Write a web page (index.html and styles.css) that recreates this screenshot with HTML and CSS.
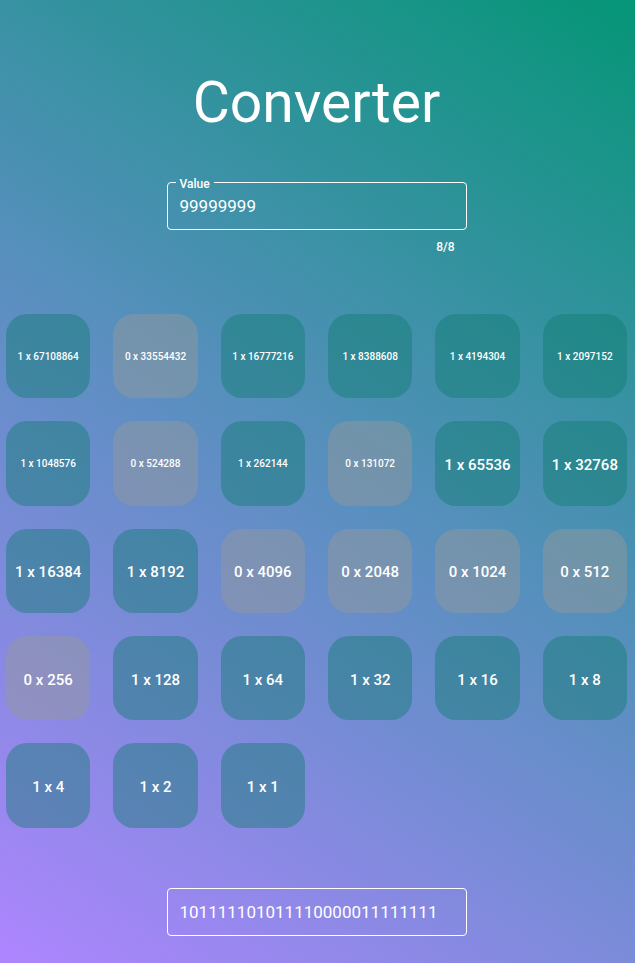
FILE: index.html
```html
<!DOCTYPE html>
<html lang="en">
<head>
<meta charset="utf-8">
<meta name="viewport" content="width=device-width, initial-scale=1">
<title>Converter</title>
<link rel="stylesheet" href="styles.css">
</head>
<body>
<main class="page">
  <h1 class="title">Converter</h1>
  <div class="entry">
    <fieldset class="field">
      <legend class="legend"><label for="value">Value</label></legend>
      <input class="input" id="value" type="text" inputmode="numeric" maxlength="8" value="99999999">
    </fieldset>
    <p class="counter">8/8</p>
  </div>
  <section class="tiles" aria-label="Bits">
    <div class="tile small">1 x 67108864</div>
    <div class="tile small off">0 x 33554432</div>
    <div class="tile small">1 x 16777216</div>
    <div class="tile small">1 x 8388608</div>
    <div class="tile small">1 x 4194304</div>
    <div class="tile small">1 x 2097152</div>
    <div class="tile small">1 x 1048576</div>
    <div class="tile small off">0 x 524288</div>
    <div class="tile small">1 x 262144</div>
    <div class="tile small off">0 x 131072</div>
    <div class="tile">1 x 65536</div>
    <div class="tile">1 x 32768</div>
    <div class="tile">1 x 16384</div>
    <div class="tile">1 x 8192</div>
    <div class="tile off">0 x 4096</div>
    <div class="tile off">0 x 2048</div>
    <div class="tile off">0 x 1024</div>
    <div class="tile off">0 x 512</div>
    <div class="tile off">0 x 256</div>
    <div class="tile">1 x 128</div>
    <div class="tile">1 x 64</div>
    <div class="tile">1 x 32</div>
    <div class="tile">1 x 16</div>
    <div class="tile">1 x 8</div>
    <div class="tile">1 x 4</div>
    <div class="tile">1 x 2</div>
    <div class="tile">1 x 1</div>
  </section>
  <input class="result" type="text" readonly aria-label="Binary" value="101111101011110000011111111">
</main>
</body>
</html>
```
FILE: styles.css
```css
* {
  box-sizing: border-box;
}

body {
  margin: 0;
  min-height: 100vh;
  background: linear-gradient(33deg, #ae85ff, #5a8fc0 50%, #059677);
  color: #fff;
  font-family: Roboto, sans-serif;
}

.page {
  display: flex;
  flex-direction: column;
  align-items: center;
  padding: 69px 8px 24px 6px;
}

.title {
  margin: 0 0 39px;
  font-size: 57px;
  font-weight: 400;
  line-height: 68px;
}

.entry {
  width: 300px;
  max-width: 100%;
  height: 138px;
}

.field {
  margin: 0;
  padding: 0;
  height: 54px;
  min-width: 0;
  border: 1px solid #fff;
  border-radius: 4px;
}

.legend {
  margin-left: 8px;
  padding: 0 4px;
  height: 12px;
  font-size: 12px;
  font-weight: 500;
  line-height: 16px;
}

.input,
.result {
  padding: 0 12px;
  border: 0;
  outline: 0;
  background: transparent;
  color: #fff;
  font-family: inherit;
  font-size: 17px;
}

.input {
  display: block;
  width: 100%;
  height: 36px;
}

.counter {
  margin: 8px 12px 0;
  font-size: 12px;
  font-weight: 500;
  line-height: 18px;
  text-align: right;
}

.tiles {
  display: grid;
  grid-template-columns: repeat(6, minmax(0, 1fr));
  gap: 23px;
  width: 100%;
}

.tile {
  display: flex;
  align-items: center;
  justify-content: center;
  aspect-ratio: 1;
  padding-top: 3px;
  border-radius: 21px;
  background: rgba(15, 123, 111, 0.44);
  font-size: 15px;
  font-weight: 500;
  line-height: 20px;
  white-space: nowrap;
}

.tile.small {
  padding-top: 1px;
  font-size: 10px;
}

.tile.off {
  background: rgba(148, 152, 154, 0.48);
}

.result {
  width: 300px;
  max-width: 100%;
  height: 48px;
  margin-top: 60px;
  border: 1px solid #fff;
  border-radius: 4px;
}
```
